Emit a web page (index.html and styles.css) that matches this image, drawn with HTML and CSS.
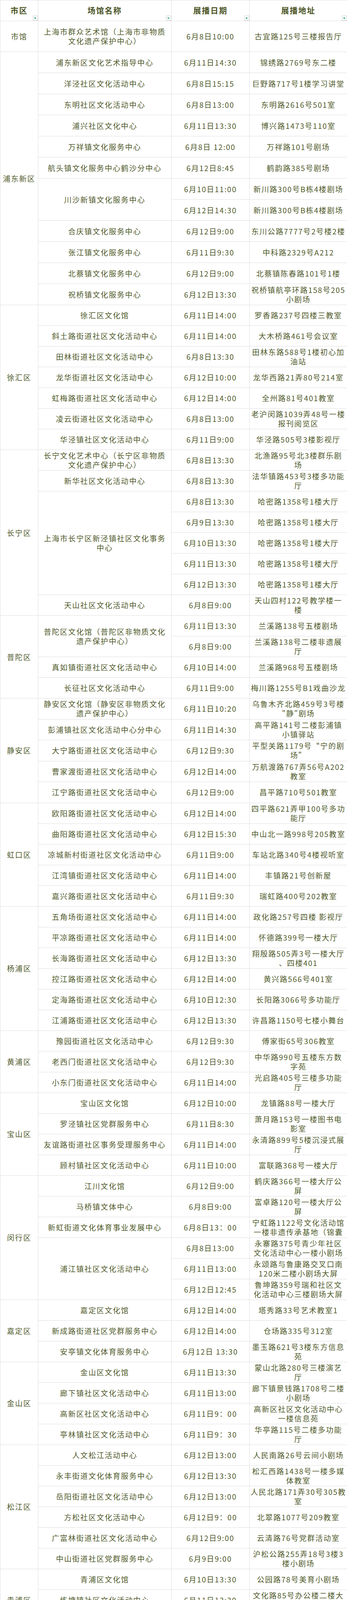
FILE: index.html
```html
<!DOCTYPE html>
<html lang="zh-CN">
<head>
<meta charset="utf-8">
<title>展播场馆一览</title>
<link rel="stylesheet" href="styles.css">
</head>
<body>
<table class="sheet">
<colgroup><col class="c1"><col class="c2"><col class="c3"><col class="c4"></colgroup>
<thead>
<tr class="hrow"><th>市区<span class="filter"></span></th><th>场馆名称<span class="filter"></span></th><th>展播日期<span class="filter"></span></th><th>展播地址<span class="filter"></span></th></tr>
</thead>
<tbody>
<tr class="tall"><td>市馆</td><td>上海市群众艺术馆（上海市非物质<br>文化遗产保护中心）</td><td>6月8日10:00</td><td>古宜路125号三楼报告厅</td></tr>

<tr class="pd"><td rowspan="12">浦东新区</td><td>浦东新区文化艺术指导中心</td><td>6月11日14:30</td><td>锦绣路2769号东二楼</td></tr>
<tr class="pd"><td>洋泾社区文化活动中心</td><td>6月8日15:15</td><td>巨野路717号1楼学习讲堂</td></tr>
<tr class="pd"><td>东明社区文化活动中心</td><td>6月8日13:00</td><td>东明路2616号501室</td></tr>
<tr class="pd"><td>浦兴社区文化中心</td><td>6月11日13:30</td><td>博兴路1473号110室</td></tr>
<tr class="pd"><td>万祥镇文化服务中心</td><td>6月8日&nbsp;12:00</td><td>万祥路101号剧场</td></tr>
<tr class="pd"><td>航头镇文化服务中心鹤沙分中心</td><td>6月12日8:45</td><td>鹤韵路385号剧场</td></tr>
<tr class="pd"><td rowspan="2">川沙新镇文化服务中心</td><td>6月10日11:00</td><td>新川路300号B栋4楼剧场</td></tr>
<tr class="pd"><td>6月12日14:30</td><td>新川路300号B栋4楼剧场</td></tr>
<tr class="pd"><td>合庆镇文化服务中心</td><td>6月12日9:00</td><td>东川公路7777号2号楼2楼</td></tr>
<tr class="pd"><td>张江镇文化服务中心</td><td>6月11日9:30</td><td>中科路2329号A212</td></tr>
<tr class="pd"><td>北蔡镇文化服务中心</td><td>6月12日9:00</td><td>北蔡镇陈春路101号1楼</td></tr>
<tr class="pd"><td>祝桥镇文化服务中心</td><td>6月12日13:30</td><td>祝桥镇航亭环路158号205<br>小剧场</td></tr>

<tr><td rowspan="7">徐汇区</td><td>徐汇区文化馆</td><td>6月11日14:00</td><td>罗香路237号四楼三教室</td></tr>
<tr><td>斜土路街道社区文化活动中心</td><td>6月11日14:00</td><td>大木桥路461号会议室</td></tr>
<tr><td>田林街道社区文化活动中心</td><td>6月8日13:30</td><td>田林东路588号1楼初心加<br>油站</td></tr>
<tr><td>龙华街道社区文化活动中心</td><td>6月12日10:00</td><td>龙华西路21弄80号214室</td></tr>
<tr><td>虹梅路街道社区文化活动中心</td><td>6月12日14:00</td><td>全州路81号401教室</td></tr>
<tr><td>凌云街道社区文化活动中心</td><td>6月8日13:00</td><td>老沪闵路1039弄48号一楼<br>报刊阅览区</td></tr>
<tr><td>华泾镇社区文化活动中心</td><td>6月11日9:00</td><td>华泾路505号3楼影视厅</td></tr>

<tr><td rowspan="8">长宁区</td><td>长宁文化艺术中心（长宁区非物质<br>文化遗产保护中心）</td><td>6月8日13:30</td><td>北渔路95号北3楼群乐剧<br>场</td></tr>
<tr><td>新华社区文化活动中心</td><td>6月8日13:30</td><td>法华镇路453号3楼多功能<br>厅</td></tr>
<tr><td rowspan="5">上海市长宁区新泾镇社区文化事务<br>中心</td><td>6月8日13:30</td><td>哈密路1358号1楼大厅</td></tr>
<tr><td>6月9日13:30</td><td>哈密路1358号1楼大厅</td></tr>
<tr><td>6月10日13:30</td><td>哈密路1358号1楼大厅</td></tr>
<tr><td>6月11日13:30</td><td>哈密路1358号1楼大厅</td></tr>
<tr><td>6月12日13:30</td><td>哈密路1358号1楼大厅</td></tr>
<tr><td>天山社区文化活动中心</td><td>6月8日9:00</td><td>天山四村122号教学楼一<br>楼</td></tr>

<tr><td rowspan="4">普陀区</td><td rowspan="2">普陀区文化馆（普陀区非物质文化<br>遗产保护中心）</td><td>6月11日13:30</td><td>兰溪路138号五楼剧场</td></tr>
<tr><td>6月8日9:00</td><td>兰溪路138号二楼非遗展<br>厅</td></tr>
<tr><td>真如镇街道社区文化活动中心</td><td>6月10日14:00</td><td>兰溪路968号五楼剧场</td></tr>
<tr><td>长征社区文化活动中心</td><td>6月11日9:00</td><td>梅川路1255号B1戏曲沙龙</td></tr>

<tr class="ja"><td rowspan="5">静安区</td><td>静安区文化馆（静安区非物质文化<br>遗产保护中心）</td><td>6月11日10:20</td><td>乌鲁木齐北路459号3号楼<br>"静"剧场</td></tr>
<tr class="ja"><td>彭浦镇社区文化活动中心分中心</td><td>6月11日14:30</td><td>高平路141号二楼彭浦镇<br>小镇驿站</td></tr>
<tr class="ja"><td>大宁路街道社区文化活动中心</td><td>6月12日9:30</td><td>平型关路1179号“宁的剧<br>场”</td></tr>
<tr class="ja"><td>曹家渡街道社区文化活动中心</td><td>6月12日14:00</td><td>万航渡路767弄56号A202<br>教室</td></tr>
<tr class="ja"><td>江宁路街道社区文化活动中心</td><td>6月12日9:00</td><td>昌平路710号501教室</td></tr>

<tr><td rowspan="5">虹口区</td><td>欧阳路街道社区文化活动中心</td><td>6月12日14:00</td><td>四平路621弄甲100号多功<br>能厅</td></tr>
<tr><td>曲阳路街道社区文化活动中心</td><td>6月12日15:30</td><td>中山北一路998号205教室</td></tr>
<tr><td>凉城新村街道社区文化活动中心</td><td>6月11日9:00</td><td>车站北路340号4楼视听室</td></tr>
<tr><td>江湾镇街道社区文化活动中心</td><td>6月11日14:00</td><td>丰镇路21号创新屋</td></tr>
<tr><td>嘉兴路街道社区文化活动中心</td><td>6月11日9:30</td><td>瑞虹路400号202教室</td></tr>

<tr><td rowspan="6">杨浦区</td><td>五角场街道社区文化活动中心</td><td>6月11日14:00</td><td>政化路257号四楼&nbsp;影视厅</td></tr>
<tr><td>平凉路街道社区文化活动中心</td><td>6月11日14:00</td><td>怀德路399号一楼大厅</td></tr>
<tr><td>长海路街道社区文化活动中心</td><td>6月12日13:30</td><td>翔殷路505弄3号一楼大厅<br>、四楼401</td></tr>
<tr><td>控江路街道社区文化活动中心</td><td>6月12日14:00</td><td>黄兴路566号401室</td></tr>
<tr><td>定海路街道社区文化活动中心</td><td>6月10日12:30</td><td>长阳路3066号多功能厅</td></tr>
<tr><td>江浦路街道社区文化活动中心</td><td>6月12日13:30</td><td>许昌路1150号七楼小舞台</td></tr>

<tr><td rowspan="3">黄浦区</td><td>豫园街道社区文化活动中心</td><td>6月12日9:30</td><td>傅家街65号306教室</td></tr>
<tr><td>老西门街道社区文化活动中心</td><td>6月12日9:30</td><td>中华路990号五楼东方数<br>字苑</td></tr>
<tr><td>小东门街道社区文化活动中心</td><td>6月11日14:00</td><td>光启路405号三楼多功能<br>厅</td></tr>

<tr><td rowspan="4">宝山区</td><td>宝山区文化馆</td><td>6月12日10:00</td><td>龙镇路88号一楼大厅</td></tr>
<tr><td>罗泾镇社区党群服务中心</td><td>6月11日8:30</td><td>萧月路153号一楼图书电<br>影室</td></tr>
<tr><td>友谊路街道社区事务受理服务中心</td><td>6月11日14:00</td><td>永清路899号5楼沉浸式展<br>厅</td></tr>
<tr><td>顾村镇社区文化活动中心</td><td>6月11日10:00</td><td>富联路368号一楼大厅</td></tr>

<tr><td rowspan="6">闵行区</td><td>江川文化馆</td><td>6月12日9:00</td><td>鹤庆路366号一楼大厅公<br>屏</td></tr>
<tr><td>马桥镇文体中心</td><td>6月8日9:00</td><td>富卓路120号一楼大厅公<br>屏</td></tr>
<tr><td>新虹街道文化体育事业发展中心</td><td>6月8日13：00</td><td>宁虹路1122号文化活动馆<br>一楼非遗传承基地（锦囊</td></tr>
<tr><td rowspan="3">浦江镇社区文化活动中心</td><td>6月8日13:00</td><td>永寨路375号青少年社区<br>文化活动中心一楼小剧场</td></tr>
<tr><td>6月11日13:00</td><td>永颂路与鲁康路交叉口南<br>120米二楼小剧场大屏</td></tr>
<tr><td>6月12日12:45</td><td>鲁坤路359号瑞和社区文<br>化活动中心三楼剧场大屏</td></tr>

<tr><td rowspan="3">嘉定区</td><td>嘉定区文化馆</td><td>6月12日14:00</td><td>塔秀路33号艺术教室1</td></tr>
<tr><td>新成路街道社区党群服务中心</td><td>6月12日14:00</td><td>仓场路335号312室</td></tr>
<tr><td>安亭镇文化体育服务中心</td><td>6月12日&nbsp;13:30</td><td>墨玉路621号3楼东方信息<br>苑</td></tr>

<tr><td rowspan="4">金山区</td><td>金山区文化馆</td><td>6月11日13:30</td><td>蒙山北路280号三楼演艺<br>厅</td></tr>
<tr><td>廊下镇社区文化活动中心</td><td>6月11日13:00</td><td>廊下镇景钱路1708号二楼<br>小剧场</td></tr>
<tr><td>高新区社区文化活动中心</td><td>6月11日9：00</td><td>高新区社区文化活动中心<br>一楼信息苑</td></tr>
<tr><td>亭林镇社区文化活动中心</td><td>6月11日9：30</td><td>华亭路115号二楼多功能<br>厅</td></tr>

<tr><td rowspan="6">松江区</td><td>人文松江活动中心</td><td>6月12日13:00</td><td>人民南路26号云间小剧场</td></tr>
<tr><td>永丰街道文化体育服务中心</td><td>6月12日13:30</td><td>松汇西路1438号一楼多媒<br>体教室</td></tr>
<tr><td>岳阳街道社区文化活动中心</td><td>6月12日13:00</td><td>人民北路171弄30号305教<br>室</td></tr>
<tr><td>方松社区文化活动中心</td><td>6月12日9：00</td><td>北翠路1077号209教室</td></tr>
<tr><td>广富林街道社区文化活动中心</td><td>6月12日9:00</td><td>云清路76号党群活动室</td></tr>
<tr><td>中山街道社区党群服务中心</td><td>6月9日9:00</td><td>沪松公路255弄18号3楼3<br>楼小剧场</td></tr>

<tr><td rowspan="3">青浦区</td><td>青浦区文化馆</td><td>6月10日13:30</td><td>公园路78号美育小剧场</td></tr>
<tr><td>练塘镇社区文化活动中心</td><td>6月11日13:30</td><td>文化路85号办公楼二楼大<br>会议室</td></tr>
<tr><td>徐泾镇社区文化活动中心</td><td>6月11日13:30</td><td>诚爱路58号210室</td></tr>

<tr><td rowspan="6">奉贤区</td><td>南桥镇社区文化活动中心</td><td>6月12日13:30</td><td>南星路333号507电影放映<br>室</td></tr>
<tr><td>奉城镇社区文化活动中心</td><td>6月11日13:30</td><td>兰博路2828号205小会议<br>室</td></tr>
<tr><td>青村镇社区文化活动中心</td><td>6月11日13:30</td><td>南明路58号2楼211室</td></tr>
<tr><td>金汇镇社区文化活动中心</td><td>6月11日13:30</td><td>金汇镇中心路10号2楼会<br>议厅</td></tr>
<tr><td>庄行镇社区文化活动中心</td><td>6月11日13:30</td><td>腾庄路6号205党群活动室</td></tr>
<tr><td>四团镇社区党群服务中心</td><td>6月12日13:00</td><td>四团镇四新街17号2楼综<br>合文化活动室</td></tr>

<tr><td rowspan="5">崇明区</td><td>崇明区文化馆</td><td>6月11日9:00</td><td>崇明大道7887号风瀛洲剧<br>场</td></tr>
<tr><td>城桥镇党群服务中心</td><td>6月11日12:00</td><td>城桥镇大陈路8弄19号403<br>教室</td></tr>
<tr><td>竖新镇党群服务中心</td><td>6月11日13:30</td><td>竖新镇团城公路1918号1<br>号楼203室</td></tr>
<tr><td>横沙乡党群服务中心</td><td>6月11日14:00</td><td>新环路468号南菁新苑2号<br>楼2楼会议室</td></tr>
<tr><td>三星镇党群服务中心</td><td>6月11日13:30</td><td>宏海公路4291号文化活动<br>中心1楼大厅</td></tr>
</tbody>
</table>
</body>
</html>
```

FILE: styles.css
```css
html, body {
  margin: 0;
  padding: 0;
  background: #ffffff;
}

body {
  font-family: "Noto Sans CJK SC", "Noto Sans", sans-serif;
  color: #4f5a2b;
}

.sheet {
  width: 888px;
  table-layout: fixed;
  border-collapse: collapse;
  border-spacing: 0;
}

.c1 { width: 97px; }
.c2 { width: 341px; }
.c3 { width: 200px; }
.c4 { width: 250px; }

.sheet th,
.sheet td {
  height: 53px;
  padding: 0 2px;
  border: 1px solid #dfdfdf;
  text-align: center;
  vertical-align: middle;
  white-space: nowrap;
  overflow: hidden;
  font-size: 19px;
  line-height: 24px;
  letter-spacing: 1.8px;
  box-sizing: border-box;
}

.sheet tr { height: 53px; }
.sheet tr.hrow { height: 53px; }
.sheet tr.tall { height: 79px; }
.sheet tr.pd { height: 54px; }
.sheet tr.ja { height: 53.5px; }

.sheet tr.tall td { height: 79px; }
.sheet tr.pd td { height: 54px; }

.sheet th {
  position: relative;
  font-size: 20px;
  font-weight: bold;
  letter-spacing: 2px;
  color: #4a5426;
}

.filter {
  position: absolute;
  right: 0;
  bottom: 0;
  width: 13px;
  height: 13px;
  box-sizing: border-box;
  border: 1px solid #cfcfcf;
  background: #ffffff;
}

.filter::after {
  content: "";
  position: absolute;
  left: 2px;
  top: 4px;
  border-left: 3.5px solid transparent;
  border-right: 3.5px solid transparent;
  border-top: 4px solid #1f9f7c;
}
```
